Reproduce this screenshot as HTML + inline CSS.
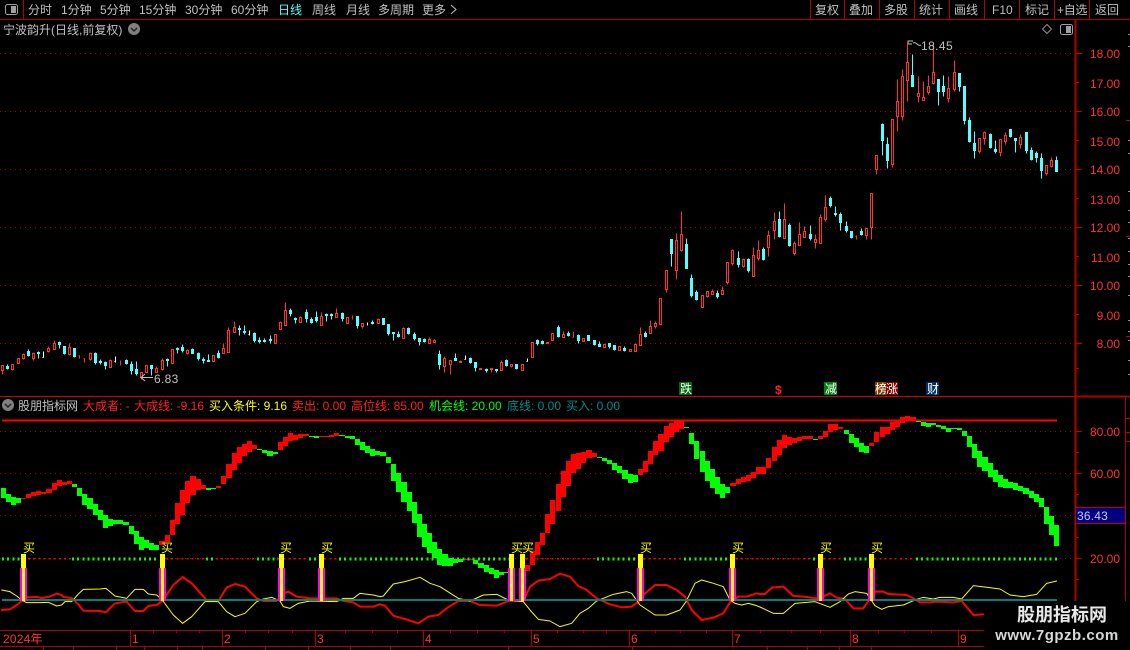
<!DOCTYPE html>
<html lang="zh">
<head>
<meta charset="utf-8">
<title>股朋指标网</title>
<style>
html,body{margin:0;padding:0;background:#000;width:1130px;height:650px;overflow:hidden}
svg{display:block}
text{font-family:"Liberation Sans","WenQuanYi Zen Hei","Noto Sans CJK SC",sans-serif;font-size:12px}
.g{fill:#c0c0c0}.r{fill:#ff3232}.y{fill:#ffff00}.n{fill:#ff2020}.gr{fill:#00ff00}.t{fill:#008a8a}
.c{shape-rendering:crispEdges}
</style>
</head>
<body>
<svg width="1130" height="650" viewBox="0 0 1130 650" xmlns="http://www.w3.org/2000/svg">
<rect width="1130" height="650" fill="#000"/>

<!-- grid -->
<g class="c" stroke="#a00000" stroke-width="1" stroke-dasharray="1 4" fill="none">
<path d="M0 53.5H1075M0 111.5H1075M0 169.5H1075M0 227.5H1075M0 285.5H1075M0 343.5H1075M0 431.5H1075M0 473.5H1075M0 515.5H1075M0 558.5H1075"/>
</g>

<!-- frames -->
<g class="c" fill="none" stroke="#b00000">
<path d="M0 19.5H1130M23.5 0V19M810.5 0V19M844.5 0V19M879.5 0V19M914.5 0V19M949.5 0V19M984.5 0V19M1019.5 0V19M1054.5 0V19M1089.5 0V19"/>
<path stroke="#d00000" d="M0 396.5H1130"/>
<path d="M0 630.5H1075M0 646.5H1130M130.5 630V646M222.5 630V646M315.5 630V646M423.5 630V646M531.5 630V646M629.5 630V646M732.5 630V646M850.5 630V646M958.5 630V646"/>
<path d="M153.5 630V633M176.5 630V633M199.5 630V633M245.5 630V633M268.5 630V633M292.5 630V633M345.5 630V633M372.5 630V633M397.5 630V633M450.5 630V633M477.5 630V633M504.5 630V633M557.5 630V633M583.5 630V633M606.5 630V633M655.5 630V633M680.5 630V633M706.5 630V633M760.5 630V633M791.5 630V633M820.5 630V633M878.5 630V633M904.5 630V633M931.5 630V633"/>
<path d="M43.5 647V650M73.5 647V650M116.5 647V650M144.5 647V650M177.5 647V650M202.5 647V650M265.5 647V650M308.5 647V650M350.5 647V650M390.5 647V650M508.5 647V650M632.5 647V650M767.5 647V650M807.5 647V650M839.5 647V650M871.5 647V650"/>
<path d="M1125.5 397V507M1125.5 523V650"/>
</g>
<rect class="c" x="1074.5" y="19" width="2" height="611" fill="#b00000"/>
<rect class="c" x="1075" y="395.500" width="52" height="2" fill="#b00000"/>

<!-- axis ticks -->
<path class="c" fill="none" stroke="#c00000" d="M1076 53.5H1082M1076 82.500H1079M1076 111.5H1082M1076 140.5H1079M1076 169.5H1082M1076 198.5H1079M1076 227.5H1082M1076 256.5H1079M1076 285.5H1082M1076 314.5H1079M1076 343.5H1082M1076 368.5H1079M1076 431.5H1082M1076 452.5H1079M1076 473.5H1082M1076 494.5H1079M1076 515.5H1082M1076 537.5H1079M1076 558.5H1082M1076 579.5H1079"/>
<path class="c" fill="none" stroke="#909090" d="M1128 34.500H1130M1128 46.500H1130M1128 140.5H1130M1128 153.5H1130M1128 191.5H1130M1128 210.5H1130M1128 222.5H1130M1128 238.5H1130M1128 251.5H1130M1128 264.5H1130M1128 276.5H1130M1128 295.5H1130M1128 320.5H1130M1128 331.5H1130M1128 340.5H1130M1128 360.5H1130M1128 374.5H1130"/>
<path class="c" fill="none" stroke="#c00000" d="M1126 120.5H1130M1126 236.5H1130M1126 336.5H1130M1126 418.5H1130M1126 432.5H1130M1126 441.5H1130"/>

<!-- toolbar -->
<rect x="5.500" y="4.500" width="12" height="10" rx="2" fill="none" stroke="#a0a0a0"/>
<rect class="c" x="11" y="6" width="5" height="7" fill="#a0a0a0"/>
<g class="g">
<text x="28" y="14">分时</text><text x="61" y="14">1分钟</text><text x="100" y="14">5分钟</text><text x="139" y="14">15分钟</text><text x="185" y="14">30分钟</text><text x="231" y="14">60分钟</text>
<text x="312" y="14">周线</text><text x="346" y="14">月线</text><text x="378" y="14">多周期</text><text x="422" y="14">更多</text>
<text x="815" y="14">复权</text><text x="849" y="14">叠加</text><text x="884" y="14">多股</text><text x="919" y="14">统计</text><text x="954" y="14">画线</text><text x="992" y="14">F10</text><text x="1025" y="14">标记</text><text x="1057" y="14" style="letter-spacing:-.3px">+自选</text><text x="1095" y="14">返回</text>
</g>
<text x="278" y="14" fill="#54ffff">日线</text>
<path d="M451 5L456 9.500L451 14" fill="none" stroke="#c0c0c0"/>

<text x="3" y="34" class="g">宁波韵升(日线,前复权)</text>
<circle cx="134" cy="29" r="6" fill="#808080"/>
<path d="M131 28L134 31L137 28" fill="none" stroke="#222" stroke-width="1.500"/>
<path d="M1042.500 29L1047 24.500L1051.500 29L1047 33.500z" fill="none" stroke="#909090"/>
<rect x="1060.500" y="24.500" width="12" height="10" rx="2" fill="none" stroke="#a0a0a0"/>
<rect class="c" x="1066" y="26" width="5" height="7" fill="#a0a0a0"/>

<!-- candles -->
<g transform="translate(.5 .5)" class="c">
<path fill="none" stroke="#ff3232" d="M2 365V374M12 364V370M23 353V359M33 352V360M48 346V352M54 340V349M69 343V355M79 355V358M78 355h1M84 358V362M83 358h1M90 352V360M110 359V367M120 360V365M141 372V379M156 366V372M162 358V370M187 349V354M213 355V361M223 343V353M228 327V352M234 321V332M280 321V329M285 302V325M300 316V322M321 312V325M336 308V317M352 315V319M362 323V328M378 319V323M403 327V338M429 337V343M434 339V342M444 356V372M450 360V374M460 360V362M491 368V372M501 360V370M511 364V367M563 331V337M573 331V337M572 337h1M635 344V351M640 327V345M650 320V333M655 321V328M666 270V292M676 233V279M681 211V251M707 291V297M712 289V294M722 286V294M727 262V284M732 249V265M743 258V267M753 247V276M758 240V260M768 230V256M774 212V239M784 203V238M794 241V255M799 222V245M804 226V237M815 234V248M820 214V243M825 195V221M856 235V239M855 236h1M866 228V239M871 193V239M876 155V174M892 119V167M897 79V131M902 69V120M907 43V101M918 76V102M923 81V100M928 75V94M933 43V84M948 76V102M954 60V91M979 138V153M984 131V144M1000 139V156M1005 132V144M1020 134V148M1046 165V175M1051 157V167"/>
<path fill="#000" stroke="#ff3232" d="M1 365h2V370h-2zM11 364h2V369h-2zM17 358h2V363h-2zM22 354h2V358h-2zM32 353h2V358h-2zM47 348h2V351h-2zM53 343h2V349h-2zM68 347h2V354h-2zM89 353h2V359h-2zM109 360h2V367h-2zM140 372h2V377h-2zM145 365h2V372h-2zM155 368h2V372h-2zM161 360h2V369h-2zM171 349h2V363h-2zM186 350h2V353h-2zM212 355h2V361h-2zM222 348h2V353h-2zM227 330h2V352h-2zM233 327h2V332h-2zM274 334h2V343h-2zM279 322h2V329h-2zM284 310h2V325h-2zM299 317h2V322h-2zM320 316h2V325h-2zM335 313h2V317h-2zM346 317h2V323h-2zM361 323h2V326h-2zM377 319h2V323h-2zM402 328h2V338h-2zM428 339h2V343h-2zM433 340h2V342h-2zM443 358h2V366h-2zM449 360h2V364h-2zM459 361h2V362h-2zM479 368h2V369h-2zM490 368h2V369h-2zM500 362h2V370h-2zM510 364h2V366h-2zM521 364h2V370h-2zM531 342h2V357h-2zM546 342h2V343h-2zM551 333h2V340h-2zM562 334h2V337h-2zM582 338h2V341h-2zM603 344h2V347h-2zM618 346h2V350h-2zM629 349h2V351h-2zM634 344h2V351h-2zM639 334h2V345h-2zM649 326h2V333h-2zM654 323h2V326h-2zM659 298h2V324h-2zM665 270h2V289h-2zM675 240h2V270h-2zM680 234h2V250h-2zM701 295h2V307h-2zM706 291h2V296h-2zM711 291h2V294h-2zM721 290h2V294h-2zM726 262h2V282h-2zM731 250h2V263h-2zM742 259h2V266h-2zM752 255h2V276h-2zM757 250h2V258h-2zM767 235h2V247h-2zM773 221h2V230h-2zM783 219h2V238h-2zM793 243h2V253h-2zM798 234h2V245h-2zM803 231h2V237h-2zM814 239h2V242h-2zM819 217h2V243h-2zM824 207h2V219h-2zM865 228h2V235h-2zM870 193h2V227h-2zM875 155h2V169h-2zM891 119h2V164h-2zM896 101h2V116h-2zM901 76h2V116h-2zM906 62h2V80h-2zM917 93h2V96h-2zM922 97h2V100h-2zM927 86h2V92h-2zM932 72h2V83h-2zM947 88h2V98h-2zM953 72h2V89h-2zM978 138h2V151h-2zM983 132h2V138h-2zM999 139h2V152h-2zM1004 135h2V141h-2zM1019 137h2V144h-2zM1045 165h2V173h-2zM1050 160h2V166h-2z"/>
<path fill="#54ffff" stroke="#54ffff" d="M7 364V369M6 366h2V368h-2zM28 349V356M27 351h2V355h-2zM38 351V358M37 352h2V353h-2zM59 341V348M58 342h2V344h-2zM64 346V354M63 346h2V353h-2zM74 348V357M73 348h2V356h-2zM95 352V364M94 353h2V362h-2zM100 359V364M99 361h2V362h-2zM105 361V369M104 362h2V365h-2zM126 359V364M125 360h2V363h-2zM131 361V374M130 364h2V370h-2zM136 361V375M135 369h2V373h-2zM151 365V375M150 365h2V368h-2zM167 358V366M166 359h2V360h-2zM177 347V353M176 348h2V349h-2zM182 344V352M181 347h2V350h-2zM192 348V353M191 349h2V353h-2zM198 352V360M197 353h2V358h-2zM203 357V363M202 359h2V360h-2zM208 354V361M207 360h2V361h-2zM218 350V358M217 353h2V357h-2zM239 325V335M238 328h2V329h-2zM244 325V334M243 331h2V332h-2zM254 332V342M253 333h2V340h-2zM259 337V343M258 340h2V341h-2zM264 338V342M263 340h2V341h-2zM270 335V343M269 339h2V340h-2zM290 308V316M289 310h2V313h-2zM295 317V323M294 318h2V319h-2zM306 309V322M305 312h2V318h-2zM311 317V323M310 319h2V322h-2zM316 311V322M315 317h2V320h-2zM326 313V321M325 314h2V315h-2zM331 313V319M330 314h2V315h-2zM342 312V321M341 313h2V318h-2zM357 316V328M356 316h2V325h-2zM372 320V324M371 322h2V323h-2zM383 318V324M382 318h2V324h-2zM388 324V335M387 324h2V333h-2zM393 332V340M392 332h2V333h-2zM398 331V337M397 334h2V336h-2zM408 327V334M407 328h2V333h-2zM414 332V340M413 334h2V338h-2zM419 338V345M418 338h2V341h-2zM424 338V342M423 339h2V341h-2zM439 350V369M438 354h2V364h-2zM455 353V360M454 358h2V360h-2zM470 357V363M469 358h2V362h-2zM475 362V371M474 362h2V367h-2zM486 368V372M485 369h2V370h-2zM496 369V372M495 369h2V370h-2zM506 359V366M505 360h2V365h-2zM516 364V369M515 364h2V368h-2zM537 339V345M536 340h2V343h-2zM542 340V344M541 341h2V343h-2zM558 325V337M557 327h2V336h-2zM568 331V336M567 333h2V335h-2zM578 334V343M577 335h2V340h-2zM588 335V340M587 335h2V340h-2zM594 340V345M593 340h2V344h-2zM599 341V346M598 344h2V346h-2zM609 343V348M608 343h2V346h-2zM614 345V350M613 345h2V349h-2zM624 346V351M623 348h2V350h-2zM645 331V337M644 333h2V336h-2zM671 239V266M670 239h2V253h-2zM686 238V268M685 244h2V268h-2zM691 274V297M690 278h2V295h-2zM696 290V300M695 292h2V299h-2zM717 290V298M716 293h2V296h-2zM738 251V267M737 258h2V264h-2zM748 258V272M747 259h2V270h-2zM763 247V260M762 249h2V259h-2zM779 211V237M778 219h2V236h-2zM789 223V246M788 225h2V245h-2zM810 225V240M809 234h2V238h-2zM830 196V207M829 198h2V205h-2zM835 206V216M834 213h2V214h-2zM840 212V230M839 214h2V222h-2zM846 221V232M845 226h2V230h-2zM851 231V238M850 231h2V237h-2zM861 228V235M860 231h2V234h-2zM882 123V155M881 124h2V140h-2zM887 137V168M886 144h2V160h-2zM912 54V86M911 75h2V86h-2zM938 79V105M937 79h2V91h-2zM943 75V96M942 86h2V91h-2zM959 73V91M958 73h2V86h-2zM964 86V124M963 86h2V120h-2zM969 117V142M968 120h2V141h-2zM974 131V158M973 143h2V150h-2zM990 133V148M989 134h2V147h-2zM995 140V153M994 149h2V151h-2zM1010 129V137M1009 129h2V136h-2zM1015 138V152M1014 138h2V140h-2zM1026 132V153M1025 132h2V150h-2zM1031 147V160M1030 150h2V159h-2zM1036 151V162M1035 153h2V157h-2zM1041 153V178M1040 158h2V170h-2zM1056 156V171M1055 160h2V171h-2z"/>
<path fill="none" stroke="#fff" d="M43 351V357M42 357h1M115 356V362M114 361h1M249 330V335M248 334h1M367 322V325M465 355V359M464 359h1M527 358V361M526 361h1"/>
</g>

<!-- high / low marks -->
<path fill="none" stroke="#c0c0c0" d="M908 44V41H913M908 44H912M913 43Q915 42 917 44T921 45"/>
<text x="921" y="50" class="g" style="letter-spacing:.4px">18.45</text>
<path fill="none" stroke="#c0c0c0" d="M153 377.500H141M145 374L141 377.500L145 381"/>
<text x="154" y="383" class="g" style="letter-spacing:.3px">6.83</text>

<!-- badges -->
<rect x="679" y="382" width="13" height="13" fill="#006a10"/>
<text x="680" y="393" fill="#fff">跌</text>
<text x="775" y="394" fill="#ff2020" style="font-weight:bold">$</text>
<rect x="824" y="382" width="13" height="13" fill="#008010"/>
<text x="825" y="393" fill="#fff">减</text>
<rect x="875" y="382" width="11" height="13" fill="#804000"/>
<text x="875" y="393" fill="#fff">榜</text>
<rect x="886" y="382" width="12" height="13" fill="#800000"/>
<text x="886" y="393" fill="#fff">涨</text>
<rect x="926" y="382" width="13" height="13" fill="#003060"/>
<text x="927" y="393" fill="#fff">财</text>

<!-- y axis labels -->
<g class="r" text-anchor="end">
<text x="1120" y="58">18.00</text><text x="1120" y="88">17.00</text><text x="1120" y="116">16.00</text><text x="1120" y="146">15.00</text><text x="1120" y="174">14.00</text><text x="1120" y="204">13.00</text><text x="1120" y="232">12.00</text><text x="1120" y="262">11.00</text><text x="1120" y="290">10.00</text><text x="1120" y="320">9.00</text><text x="1120" y="348">8.00</text>
<text x="1120" y="436">80.00</text><text x="1120" y="478">60.00</text><text x="1120" y="563">20.00</text>
</g>
<rect class="c" x="1075.500" y="507.500" width="50" height="16" fill="#000080" stroke="#c00000"/>
<text x="1077" y="520" fill="#c8c8ff" style="letter-spacing:.2px">36.43</text>

<!-- indicator legend -->
<circle cx="8" cy="405" r="6" fill="#808080"/>
<path d="M5 404L8 407L11 404" fill="none" stroke="#222" stroke-width="1.500"/>
<text x="18" y="410" class="g">股朋指标网</text>
<text x="83" y="410" class="n">大成者: -</text>
<text x="134" y="410" class="n">大成线: -9.16</text>
<text x="209" y="410" class="y">买入条件: 9.16</text>
<text x="292" y="410" class="n">卖出: 0.00</text>
<text x="351" y="410" class="n">高位线: 85.00</text>
<text x="429" y="410" class="gr">机会线: 20.00</text>
<text x="507" y="410" class="t">底线: 0.00</text>
<text x="566" y="410" class="t">买入: 0.00</text>

<!-- 85 line -->
<rect class="c" x="2" y="419.500" width="1055" height="2" fill="#ff0000"/>

<!-- band -->
<path class="c" fill="#00ff00" d="M1 488H6V498H1zM6 494H11V502H6zM11 497H16V505H11zM16 498H21V503H16zM72 484H77V487H72zM77 488H82V496H77zM82 494H87V505H82zM87 498H93V509H87zM93 504H98V515H93zM98 510H103V520H98zM103 515H108V528H103zM108 519H113V526H108zM113 520H118V524H113zM118 520H123V524H118zM123 522H129V525H123zM129 526H134V534H129zM134 531H139V544H134zM139 537H144V550H139zM144 540H149V548H144zM149 543H154V550H149zM154 545H159V550H154zM206 488H211V490H206zM211 488H216V489H211zM257 449H262V450H257zM262 450H267V453H262zM267 451H273V456H267zM273 452H278V454H273zM309 436H314V437H309zM314 436H319V438H314zM339 435H345V436H339zM345 436H350V438H345zM350 436H355V439H350zM355 439H360V445H355zM360 442H365V450H360zM365 446H370V453H365zM370 449H375V456H370zM375 451H380V455H375zM380 452H386V456H380zM386 457H391V463H386zM391 464H396V481H391zM396 473H401V492H396zM401 482H407V502H401zM407 492H412V511H407zM412 502H417V523H412zM417 514H422V537H417zM422 524H427V547H422zM427 533H432V553H427zM432 542H437V558H432zM437 549H442V565H437zM442 554H448V566H442zM448 558H453V566H448zM453 559H458V563H453zM458 559H463V562H458zM473 560H478V564H473zM478 563H484V568H478zM484 565H489V572H484zM489 568H494V574H489zM494 570H499V578H494zM499 572H504V575H499zM504 572H509V573H504zM597 457H602V458H597zM602 458H607V461H602zM607 460H612V464H607zM612 463H617V470H612zM617 466H622V473H617zM622 470H628V479H622zM628 474H633V483H628zM633 475H638V482H633zM684 427H689V428H684zM689 433H694V444H689zM694 441H699V459H694zM700 451H705V472H700zM705 461H710V481H705zM710 469H715V488H710zM715 477H720V494H715zM720 484H725V498H720zM725 487H730V493H725zM813 439H818V440H813zM844 430H849V434H844zM849 434H854V443H849zM854 438H859V447H854zM859 443H864V452H859zM864 446H869V453H864zM916 421H921V422H916zM921 422H926V426H921zM926 423H931V427H926zM931 423H936V425H931zM936 425H941V427H936zM941 426H946V429H941zM946 428H951V432H946zM951 428H957V429H951zM957 428H962V430H957zM962 431H967V436H962zM967 436H972V447H967zM972 444H977V458H972zM977 451H982V467H977zM982 457H988V471H982zM988 463H993V477H988zM993 470H998V482H993zM998 475H1003V487H998zM1003 479H1008V488H1003zM1008 482H1013V488H1008zM1013 483H1018V490H1013zM1018 486H1023V491H1018zM1023 488H1029V494H1023zM1029 491H1034V498H1029zM1034 494H1039V502H1034zM1039 498H1044V507H1039zM1044 507H1049V524H1044zM1049 516H1054V535H1049zM1054 525H1059V546H1054z"/>
<path class="c" fill="#ff0000" d="M21 498H26V499H21zM26 494H31V498H26zM31 492H36V496H31zM36 491H41V495H36zM41 492H46V494H41zM46 489H52V493H46zM52 483H57V490H52zM57 480H62V486H57zM62 482H67V485H62zM67 481H72V484H67zM159 541H165V545H159zM165 535H170V542H165zM170 520H175V535H170zM175 503H180V524H175zM180 490H185V515H180zM185 481H190V503H185zM190 476H196V495H190zM196 479H201V490H196zM201 485H206V489H201zM216 486H221V488H216zM221 476H226V484H221zM226 464H232V478H226zM232 453H237V470H232zM237 447H242V463H237zM242 444H247V456H242zM247 441H252V452H247zM252 445H257V449H252zM278 442H283V450H278zM283 437H288V446H283zM288 433H293V441H288zM293 435H298V440H293zM298 434H303V438H298zM303 434H309V436H303zM319 436H329V437H319zM329 435H334V437H329zM334 433H339V436H334zM463 559H473V560H463zM525 565H530V571H525zM530 551H535V565H530zM535 542H540V555H535zM540 533H545V545H540zM545 514H550V533H545zM550 500H555V524H550zM556 484H561V511H556zM561 471H566V497H561zM566 461H571V486H566zM571 454H576V473H571zM576 453H581V469H576zM581 452H586V463H581zM586 450H592V458H586zM592 453H597V457H592zM638 469H643V475H638zM643 461H648V472H643zM648 451H653V464H648zM653 441H658V455H653zM658 434H664V451H658zM664 426H669V442H664zM669 423H674V437H669zM674 421H679V432H674zM679 420H684V429H679zM730 483H736V486H730zM736 479H741V484H736zM741 477H746V482H741zM746 475H751V481H746zM751 472H756V478H751zM756 467H761V474H756zM761 467H766V474H761zM766 458H771V468H766zM772 447H777V461H772zM777 440H782V455H777zM782 435H787V448H782zM787 437H792V445H787zM792 438H797V443H792zM797 437H802V441H797zM802 436H807V439H802zM807 436H813V439H807zM818 436H823V439H818zM823 431H828V437H823zM828 424H833V432H828zM833 424H838V430H833zM838 427H843V429H838zM869 443H874V446H869zM874 432H879V442H874zM880 427H885V437H880zM885 427H890V434H885zM890 422H895V430H890zM895 420H900V427H895zM900 417H905V423H900zM905 416H910V421H905zM910 417H916V420H910z"/>

<!-- 20 line ticks -->
<g fill="none" stroke-dasharray="2 3.140">
<path stroke="#00ff00" stroke-width="3" class="c" d="M2 559H21M72 559H159M206 559H216M257 559H278M309 559H319M339 559H509M597 559H638M684 559H730M813 559H818M844 559H869M916 559H1059"/>
<path stroke="#ff0000" stroke-width="1.500" class="c" d="M28 558.500H72M166 558.500H206M216 558.500H257M278 558.500H309M319 558.500H339M526 558.500H597M638 558.500H684M736 558.500H813M818 558.500H844M869 558.500H916"/>
</g>

<!-- oscillator lines -->
<g fill="none" stroke-linejoin="round" stroke-linecap="round">
<g transform="translate(0 395) scale(.33333)">
<path stroke="#ff0000" stroke-width="6" d="M5 645L30 643L50 630L65 618L80 607L110 606L125 609L145 606L170 596L185 600L190 606L215 609L235 628L250 647L300 648L318 652L345 625L380 620L405 648L430 648L445 633L470 630L487 618L500 600L520 570L548 546L575 565L615 610L625 618L655 618L680 578L705 567L735 575L770 610L790 618L830 618L850 595L865 590L890 605L930 610L1010 610L1030 618L1060 622L1080 635L1120 635L1140 628"/>
<path stroke="#ffff00" stroke-width="3" d="M5 585L30 590L50 603L65 615L80 623L120 623L145 622L170 633L185 630L195 620L215 620L235 597L250 583L300 582L318 580L345 603L380 610L405 583L430 583L445 597L470 600L487 615L500 633L520 660L548 685L575 665L615 620L655 620L680 650L705 665L735 655L770 620L790 612L815 607L840 618L850 635L870 640L895 625L930 618L1010 620L1030 610L1060 610L1080 595L1120 600L1140 605"/>
</g>
<g transform="translate(380 395) scale(.33333)">
<path stroke="#ff0000" stroke-width="6" d="M0 628L15 632L40 662L60 668L85 675L115 685L145 665L175 660L200 640L235 618L270 618L300 630L350 632L385 618L430 618L450 575L475 557L510 552L540 536L570 545L595 573L620 585L650 610L690 628L725 637L755 635L775 620L790 600L825 570L860 570L890 585L915 605L935 645L965 675L1000 668L1030 655L1050 622L1075 605L1100 605L1130 595L1140 598"/>
<path stroke="#ffff00" stroke-width="3" d="M0 605L10 603L40 567L75 560L120 547L150 565L180 575L235 610L270 618L310 600L350 598L385 615L430 620L450 645L475 673L510 678L540 695L575 685L600 655L625 640L650 618L700 598L740 590L755 595L780 630L825 660L860 660L900 645L918 620L945 565L965 555L1000 565L1030 575L1050 615L1065 625L1085 630L1105 625L1130 632L1140 636"/>
</g>
<g transform="translate(760 395) scale(.33333)">
<path stroke="#ff0000" stroke-width="6" d="M0 597L15 597L35 578L70 575L100 603L130 605L170 610L190 605L210 595L230 608L255 612L280 640L310 640L325 618L345 590L370 590L385 597L440 600L460 610L480 622L510 622L530 620L580 622L605 618L640 660L670 658"/>
<path stroke="#ffff00" stroke-width="3" d="M0 636L40 655L70 655L105 625L165 620L210 637L240 620L265 597L285 590L320 595L345 632L365 643L385 635L430 630L470 613L490 607L520 612L540 607L580 607L605 612L640 572L665 575L720 582L750 600L790 605L830 598L860 565L890 558"/>
</g>
</g>
<rect class="c" x="2" y="599" width="1055" height="2" fill="#008080"/>

<!-- buy bars -->
<path class="c" fill="#ff00ff" d="M20 568h7v33h-7zM159 568h7v33h-7zM278 568h7v33h-7zM318 568h7v33h-7zM508 568h7v33h-7zM519 568h7v33h-7zM637 568h7v33h-7zM729 568h7v33h-7zM817 568h7v33h-7zM868 568h7v33h-7z"/>
<path class="c" fill="#ffff00" d="M21 554h5v14h-5zM160 554h5v14h-5zM279 554h5v14h-5zM319 554h5v14h-5zM509 554h5v14h-5zM520 554h5v14h-5zM638 554h5v14h-5zM730 554h5v14h-5zM818 554h5v14h-5zM869 554h5v14h-5zM22 568h3v33h-3zM161 568h3v33h-3zM280 568h3v33h-3zM320 568h3v33h-3zM510 568h3v33h-3zM521 568h3v33h-3zM639 568h3v33h-3zM731 568h3v33h-3zM819 568h3v33h-3zM870 568h3v33h-3z"/>
<g class="y" text-anchor="middle">
<text x="29" y="552">买</text><text x="167" y="552">买</text><text x="286" y="552">买</text><text x="327" y="552">买</text><text x="517" y="552">买</text><text x="528" y="552">买</text><text x="646" y="552">买</text><text x="738" y="552">买</text><text x="826" y="552">买</text><text x="877" y="552">买</text>
</g>

<!-- date labels -->
<g class="r">
<text x="3" y="643" style="letter-spacing:.2px">2024年</text>
<text x="132" y="643">1</text><text x="224" y="643">2</text><text x="317" y="643">3</text><text x="425" y="643">4</text><text x="533" y="643">5</text><text x="631" y="643">6</text><text x="734" y="643">7</text><text x="852" y="643">8</text><text x="960" y="643">9</text>
</g>

<!-- watermark -->
<rect class="c" x="984" y="601" width="146" height="49" fill="#000"/>
<text x="1062" y="621" text-anchor="middle" fill="#e8e8e8" style="font-size:18px;font-weight:bold">股朋指标网</text>
<text x="1057" y="640" text-anchor="middle" fill="#d8d8d8" style="font-size:15px;font-weight:bold;letter-spacing:.5px">www.7gpzb.com</text>
</svg>
</body>
</html>
